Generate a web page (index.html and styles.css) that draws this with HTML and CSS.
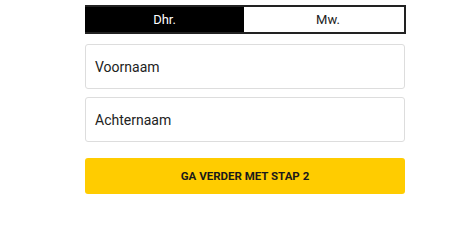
FILE: index.html
```html
<!DOCTYPE html>
<html lang="nl">
<head>
<meta charset="utf-8">
<link rel="stylesheet" href="styles.css">
</head>
<body>
<form class="form">
  <div class="toggle">
    <div class="opt opt-active">Dhr.</div>
    <div class="opt opt-right">Mw.</div>
  </div>
  <div class="field field-first">Voornaam</div>
  <div class="field">Achternaam</div>
  <div class="btn">GA VERDER MET STAP 2</div>
</form>
</body>
</html>
```
FILE: styles.css
```css
html, body {
  margin: 0;
  padding: 0;
  background: #fff;
}
body {
  font-family: Roboto, "Liberation Sans", sans-serif;
}
.form {
  width: 320px;
  margin-left: 85px;
  padding-top: 5px;
  display: flex;
  flex-direction: column;
}
.toggle {
  display: flex;
  height: 29px;
  box-sizing: border-box;
  border: 2px solid #222;
  border-left: 0;
  width: 321px;
}
.opt {
  flex: 1;
  display: flex;
  align-items: center;
  justify-content: center;
  font-size: 13px;
  color: #222;
  background: #fff;
}
.opt-right {
  padding-left: 8px;
}
.opt-active {
  flex: 0 0 159px;
  background: #000;
  color: #fff;
}
.field {
  height: 45px;
  box-sizing: border-box;
  border: 1px solid #ddd;
  border-radius: 3px;
  display: flex;
  align-items: center;
  padding-left: 9px;
  font-size: 14px;
  color: #222;
  margin-top: 8px;
}
.field-first {
  margin-top: 10px;
}
.btn {
  margin-top: 16px;
  height: 36px;
  background: #ffcc00;
  border-radius: 3px;
  display: flex;
  align-items: center;
  justify-content: center;
  font-size: 11.5px;
  font-weight: 700;
  color: #1a1a1a;
}
```
